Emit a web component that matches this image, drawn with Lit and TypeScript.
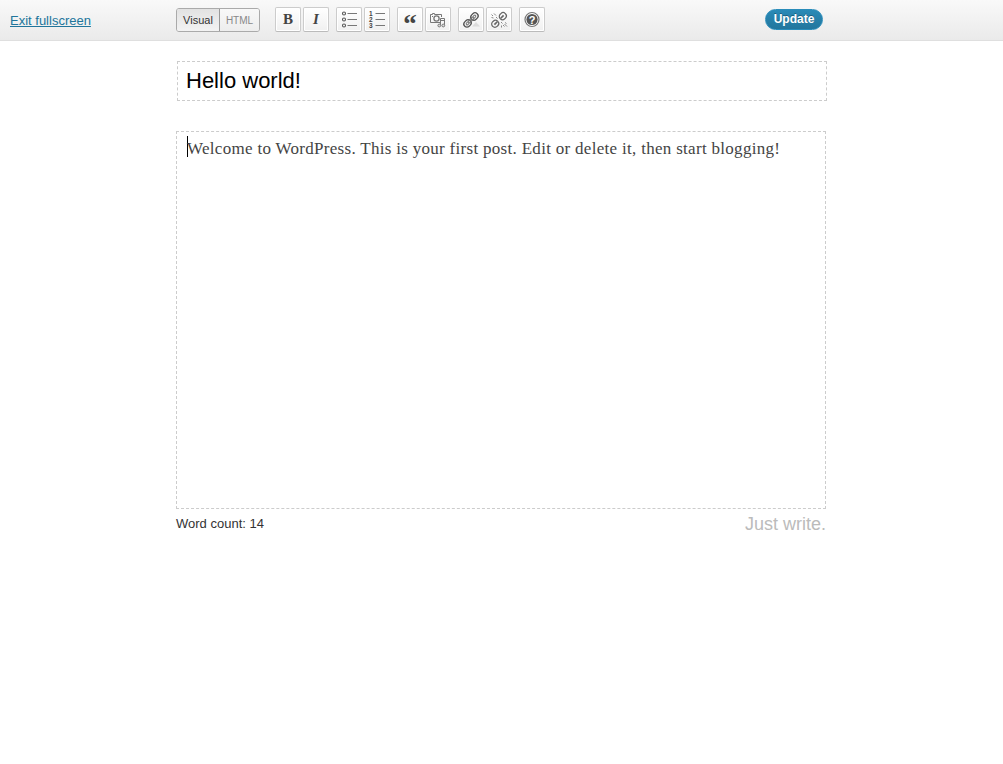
import { LitElement, html, css, svg } from "lit";
import { customElement } from "lit/decorators.js";

const ring = (cy: number) => svg`<circle cx="5" cy=${cy} r="1.5" fill="#fff" stroke="#555" stroke-width="1.1"/><path d="M8.5 ${cy}H18" stroke="#777"/>`;

const icons: Record<string, unknown> = {
  bullets: svg`${ring(3.5)}${ring(9.5)}${ring(15.5)}`,
  numbers: svg`<path d="M8.5 3.5H18M8.5 9.5H18M8.5 15.5H18" stroke="#777"/>
    <g class="num"><text x="2" y="6">1</text><text x="2" y="12">2</text><text x="2" y="18">3</text></g>`,
  media: svg`<g fill="none" stroke="#777">
    <path d="M12.5 12.500H2.500V4.500H4.500V3.500H6.500V4.500H13.500V7"/>
    <circle cx="8.500" cy="8.500" r="2.600" stroke-width="1.300"/><path d="M4 6.500h1" />
    <path d="M12.500 15.500V8.500H16.500V15.500M12.500 10.500H16.500"/>
    <circle cx="11.300" cy="15.500" r="1.400" fill="#ddd"/><circle cx="15.300" cy="15.500" r="1.400" fill="#ddd"/></g>`,
  link: svg`<path d="M11 16.500H19L15 12Z" fill="#ccc" opacity=".6"/>
    <g fill="none" stroke="#555" stroke-width="1.300" transform="rotate(-45 10 10)">
    <rect x="1.200" y="6.900" width="7.800" height="6.200" rx="3.100"/><rect x="11" y="6.900" width="7.800" height="6.200" rx="3.100"/>
    <rect x="3.600" y="9" width="3" height="2" rx="1" stroke="#777" stroke-width="1"/><rect x="13.400" y="9" width="3" height="2" rx="1" stroke="#777" stroke-width="1"/>
    <path d="M6.500 8.900H13.500M6.500 11.100H13.500" stroke="#777"/></g>`,
  unlink: svg`<g fill="none" stroke="#666" stroke-width="1.200">
    <g transform="rotate(-45 10 10)"><rect x="1" y="6.800" width="7.200" height="6.400" rx="3.100"/><rect x="11.800" y="6.800" width="7.200" height="6.400" rx="3.100"/>
    <path d="M3.500 10H7.500M12.500 10H16.500" stroke-width="1.700"/></g>
    <g stroke="#888" stroke-width="1"><path d="M2.500 4.500L4 6M5 3.500L7 5.500M2.500 7.500L4.500 8M7 7L8.500 8.500M12 12L13.500 13.500M14 15L15.500 16.500M16 12.500L17.500 13.500M12.500 15.500V17.500M15.500 14L18 16.500"/></g></g>`,
  help: svg`<circle cx="10" cy="9.500" r="7" fill="#fff" stroke="#777" stroke-width="1.200"/><circle cx="10" cy="9.500" r="5.600" fill="#555"/>
    <text class="mark" x="10" y="13.500">?</text>`,
};

@customElement("app-root")
export class AppRoot extends LitElement {
  static styles = css`
    :host { display: block; height: 764px; background: #fff; font-family: "Liberation Sans", Arial, sans-serif; color: #333; overflow: hidden; }
    .bar { box-sizing: border-box; height: 41px; display: flex; background: linear-gradient(#f9f9f9, #eaeaea); border-bottom: 1px solid #dfdfdf; }
    .exit { width: 166px; padding: 12px 0 0 10px; font-size: 13px; line-height: 17px; }
    .exit a { color: #21759b; text-decoration: underline; }
    .modes { box-sizing: border-box; width: 84px; height: 24px; margin: 8px 15px 0 0; display: flex; border: 1px solid #aaa; border-radius: 3px; font-size: 11px; line-height: 22px; text-align: center; overflow: hidden; }
    .visual { width: 42px; border-right: 1px solid #999; background: linear-gradient(#e2e2e2, #f3f3f3); color: #333; }
    .code { flex: 1; color: #888; font-size: 10px; background: linear-gradient(#f8f8f8, #ededed); line-height: 23px; }
    .tools { display: flex; gap: 7px; padding-top: 7px; width: 490px; }
    .group { display: flex; gap: 2px; }
    .tool { box-sizing: border-box; width: 26px; height: 25px; border: 1px solid #ccc; border-bottom-color: #bbb; border-radius: 2px; background: linear-gradient(#fff, #f0f0f0); display: flex; justify-content: center; align-items: center; font: bold 15px/23px "Liberation Serif", serif; color: #444; box-shadow: inset 0 0 0 1px #fff; }
    .italic { font-style: italic; }
    .quote { font-size: 27px; line-height: 32px; align-items: flex-start; overflow: hidden; }
    svg { display: block; width: 20px; height: 20px; flex: none; }
    .num { font: bold 6.5px "Liberation Sans", sans-serif; fill: #444; }
    .mark { font: bold 11px "Liberation Sans", sans-serif; fill: #fff; text-anchor: middle; }
    .update { box-sizing: border-box; width: 58px; height: 21px; margin-top: 9px; border: 1px solid #298cba; border-radius: 11px; background: linear-gradient(#2a8ab7, #22769d); color: #fff; font-size: 12px; font-weight: bold; line-height: 19px; text-align: center; text-shadow: 0 -1px 0 rgba(0, 0, 0, .3); }
    .page { width: 651px; margin: 20px 0 0 176px; }
    .title { box-sizing: border-box; width: 650px; height: 40px; margin-left: 1px; border: 1px dashed #ccc; padding: 0 8px; font-size: 22px; line-height: 37px; color: #000; }
    .editor { box-sizing: border-box; width: 650px; height: 378px; margin-top: 30px; border: 1px dashed #ccc; padding: 4px 10px; display: flex; }
    .caret { width: 1px; height: 21px; background: #000; margin-right: -1px; }
    .body { font: 17px/25px "Liberation Serif", serif; letter-spacing: 0.3px; white-space: nowrap; color: #444; }
    .foot { width: 650px; display: flex; justify-content: space-between; }
    .count { font-size: 13px; line-height: 30px; }
    .just { font-size: 18px; line-height: 30px; color: #bbb; }
  `;

  private icon(name: string) {
    return html`<span class="tool"><svg viewBox="0 0 20 20">${icons[name]}</svg></span>`;
  }

  render() {
    return html`
      <div class="bar">
        <div class="exit"><a>Exit fullscreen</a></div>
        <div class="modes"><span class="visual">Visual</span><span class="code">HTML</span></div>
        <div class="tools">
          <div class="group"><span class="tool">B</span><span class="tool italic">I</span></div>
          <div class="group">${this.icon("bullets")}${this.icon("numbers")}</div>
          <div class="group"><span class="tool quote">“</span>${this.icon("media")}</div>
          <div class="group">${this.icon("link")}${this.icon("unlink")}</div>
          <div class="group">${this.icon("help")}</div>
        </div>
        <div class="update">Update</div>
      </div>
      <div class="page">
        <div class="title">Hello world!</div>
        <div class="editor"><span class="caret"></span><span class="body">Welcome to WordPress. This is your first post. Edit or delete it, then start blogging!</span></div>
        <div class="foot"><span class="count">Word count: 14</span><span class="just">Just write.</span></div>
      </div>`;
  }
}
